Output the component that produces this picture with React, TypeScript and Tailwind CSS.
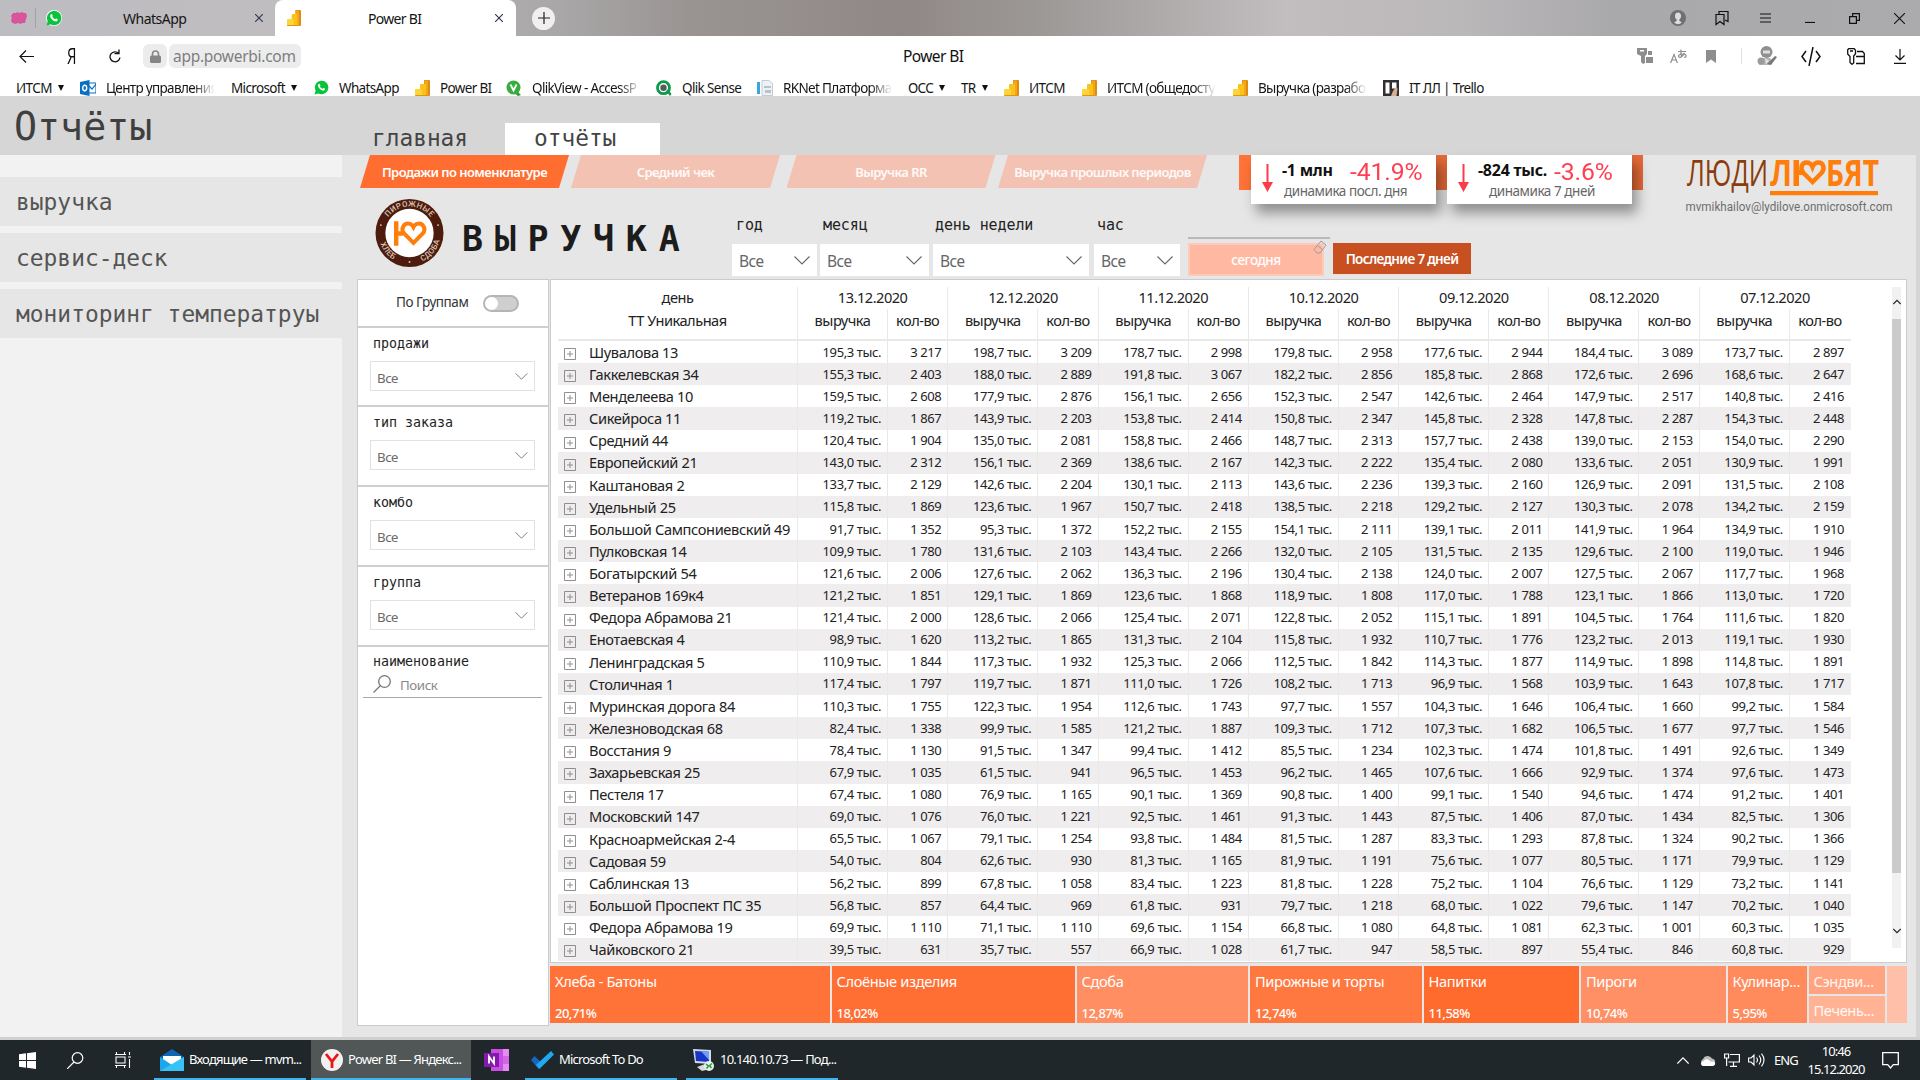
import React from "react";

const SANS = "font-['Noto_Sans','Open_Sans',sans-serif]";
const MONO = "font-['DejaVu_Sans_Mono',monospace]";

const dates = ["13.12.2020", "12.12.2020", "11.12.2020", "10.12.2020", "09.12.2020", "08.12.2020", "07.12.2020"];

const rows: string[] = [
  "Шувалова 13|195,3|3 217|198,7|3 209|178,7|2 998|179,8|2 958|177,6|2 944|184,4|3 089|173,7|2 897",
  "Гаккелевская 34|155,3|2 403|188,0|2 889|191,8|3 067|182,2|2 856|185,8|2 868|172,6|2 696|168,6|2 647",
  "Менделеева 10|159,5|2 608|177,9|2 876|156,1|2 656|152,3|2 547|142,6|2 464|147,9|2 517|140,8|2 416",
  "Сикейроса 11|119,2|1 867|143,9|2 203|153,8|2 414|150,8|2 347|145,8|2 328|147,8|2 287|154,3|2 448",
  "Средний 44|120,4|1 904|135,0|2 081|158,8|2 466|148,7|2 313|157,7|2 438|139,0|2 153|154,0|2 290",
  "Европейский 21|143,0|2 312|156,1|2 369|138,6|2 167|142,3|2 222|135,4|2 080|133,6|2 051|130,9|1 991",
  "Каштановая 2|133,7|2 129|142,6|2 204|130,1|2 113|143,6|2 236|139,3|2 160|126,9|2 091|131,5|2 108",
  "Удельный 25|115,8|1 869|123,6|1 967|150,7|2 418|138,5|2 218|129,2|2 127|130,3|2 078|134,2|2 159",
  "Большой Сампсониевский 49|91,7|1 352|95,3|1 372|152,2|2 155|154,1|2 111|139,1|2 011|141,9|1 964|134,9|1 910",
  "Пулковская 14|109,9|1 780|131,6|2 103|143,4|2 266|132,0|2 105|131,5|2 135|129,6|2 100|119,0|1 946",
  "Богатырский 54|121,6|2 006|127,6|2 062|136,3|2 196|130,4|2 138|124,0|2 007|127,5|2 067|117,7|1 968",
  "Ветеранов 169к4|121,2|1 851|129,1|1 869|123,6|1 868|118,9|1 808|117,0|1 788|123,1|1 866|113,0|1 720",
  "Федора Абрамова 21|121,4|2 000|128,6|2 066|125,4|2 071|122,8|2 052|115,1|1 891|104,5|1 764|111,6|1 820",
  "Енотаевская 4|98,9|1 620|113,2|1 865|131,3|2 104|115,8|1 932|110,7|1 776|123,2|2 013|119,1|1 930",
  "Ленинградская 5|110,9|1 844|117,3|1 932|125,3|2 066|112,5|1 842|114,3|1 877|114,9|1 898|114,8|1 891",
  "Столичная 1|117,4|1 797|119,7|1 871|111,0|1 726|108,2|1 713|96,9|1 568|103,9|1 643|107,8|1 717",
  "Муринская дорога 84|110,3|1 755|122,3|1 954|112,6|1 743|97,7|1 557|104,3|1 646|106,4|1 660|99,2|1 584",
  "Железноводская 68|82,4|1 338|99,9|1 585|121,2|1 887|109,3|1 712|107,3|1 682|106,5|1 677|97,7|1 546",
  "Восстания 9|78,4|1 130|91,5|1 347|99,4|1 412|85,5|1 234|102,3|1 474|101,8|1 491|92,6|1 349",
  "Захарьевская 25|67,9|1 035|61,5|941|96,5|1 453|96,2|1 465|107,6|1 666|92,9|1 374|97,6|1 473",
  "Пестеля 17|67,4|1 080|76,9|1 165|90,1|1 369|90,8|1 400|99,1|1 540|94,6|1 474|91,2|1 401",
  "Московский 147|69,0|1 076|76,0|1 221|92,5|1 461|91,3|1 443|87,5|1 406|87,0|1 434|82,5|1 306",
  "Красноармейская 2-4|65,5|1 067|79,1|1 254|93,8|1 484|81,5|1 287|83,3|1 293|87,8|1 324|90,2|1 366",
  "Садовая 59|54,0|804|62,6|930|81,3|1 165|81,9|1 191|75,6|1 077|80,5|1 171|79,9|1 129",
  "Саблинская 13|56,2|899|67,8|1 058|83,4|1 223|81,8|1 228|75,2|1 104|76,6|1 129|73,2|1 141",
  "Большой Проспект ПС 35|56,8|857|64,4|969|61,8|931|79,7|1 218|68,0|1 022|79,6|1 147|70,2|1 040",
  "Федора Абрамова 19|69,9|1 110|71,1|1 110|69,6|1 154|66,8|1 080|64,8|1 081|62,3|1 001|60,3|1 035",
  "Чайковского 21|39,5|631|35,7|557|66,9|1 028|61,7|947|58,5|897|55,4|846|60,8|929",
];

function Chevron({ className = "" }: { className?: string }) {
  return (
    <svg className={className} viewBox="0 0 16 9" fill="none" stroke="currentColor" strokeWidth="1.1">
      <path d="M.5.5 8 8 15.5.5" />
    </svg>
  );
}

function PbiIcon({ className = "w-[15px] h-4" }: { className?: string }) {
  return (
    <svg className={className} viewBox="0 0 15 16" preserveAspectRatio="none">
      <path d="M9 0h5q1 0 1 1v14q0 1-1 1H9z" fill="#e08a10" />
      <path d="M9.5.5h3.5V16H9z" fill="#f0a818" />
      <path d="M5 5q0-1 1-1h4q1 0 1 1v11H5z" fill="#fbc21c" />
      <path d="M0 10q0-1 1-1h5q1 0 1 1v6H1q-1 0-1-1z" fill="#fdd534" />
      <path d="M0 15h14q-.5 1-1 1H1q-1 0-1-1z" fill="#e59316" />
    </svg>
  );
}

function WhatsAppIcon({ className = "w-[15px] h-[15px]" }: { className?: string }) {
  return (
    <svg className={className} viewBox="0 0 16 16">
      <circle cx="8" cy="8" r="8" fill="#fff" />
      <path d="M.6 15.4 1.7 11.300A7.200 7.200 0 1 1 4.600 14.300z" fill="#08c33c" />
      <path d="M5 4.200q.7-.6 1.200.2l.6 1.300q.1.4-.5 1.100 1 1.700 2.800 2.500.8-1 1.100-.8l1.500.8q.3 1.700-1.500 2.100C7.500 11.500 4 8 4.100 5.700q.1-.9.900-1.500z" fill="#fff" />
    </svg>
  );
}

function OutlookIcon() {
  return (
    <svg className="h-4 w-4" viewBox="0 0 16 16">
      <path d="M7 3h9v10H7z" fill="#fff" stroke="#0a6fc2" strokeWidth="1.200" />
      <path d="m8 5 4 4 4-5" fill="none" stroke="#0a6fc2" strokeWidth="1.200" />
      <path d="m0 2 9.500-2v16L0 14z" fill="#0a6fc2" />
      <ellipse cx="4.700" cy="8" rx="2" ry="2.700" fill="none" stroke="#fff" strokeWidth="1.400" />
    </svg>
  );
}

function QlikViewIcon() {
  return (
    <svg className="h-4 w-4" viewBox="0 0 16 16">
      <path d="m10 10 5 5-3 1-4-3z" fill="#2c9a35" />
      <circle cx="7.500" cy="7.500" r="7" fill="#36ad3e" />
      <path d="m4.500 4.500 3 6 3-6" fill="none" stroke="#fff" strokeWidth="1.800" />
    </svg>
  );
}

function QlikSenseIcon() {
  return (
    <svg className="h-4 w-4" viewBox="0 0 16 16">
      <circle cx="7.500" cy="7.700" r="6" fill="#fff" stroke="#0a9a4a" strokeWidth="2.800" />
      <circle cx="7.500" cy="7.700" r="3.200" fill="#545a5e" />
      <path d="m10 11 2-1.500 3.500 4.500-1.500 2z" fill="#0a9a4a" />
    </svg>
  );
}

function RkIcon() {
  return (
    <svg className="h-4 w-4" viewBox="0 0 16 16">
      <path d="M0 2h3v12H0z" fill="#3ea3dc" />
      <path d="M5 .5h7l3.500 3V15.500H5z" fill="#eef2f5" stroke="#c2cdd5" />
      <path d="M7 6h7v2H7zM8 10h6v3H8z" fill="#b7c4d0" />
    </svg>
  );
}

function TrelloIcon() {
  return (
    <svg className="h-4 w-4" viewBox="0 0 16 16">
      <path d="M0 0h16v16H0z" fill="#322f33" />
      <path d="M2.500 2.500h4v11h-4zM9 2.500h4.500v6H9z" fill="#fff" />
      <path d="m10 11 3-4 1.500 1.500-1 7.500H8z" fill="#d6b08c" />
    </svg>
  );
}

type Mark = { w: string; icon?: React.ReactNode; text: string; menu?: boolean; fade?: boolean };
const marks: Mark[] = [
  { w: "w-[64px]", text: "ИТСМ", menu: true },
  { w: "w-[151px]", icon: <OutlookIcon />, text: "Центр управления", fade: true },
  { w: "w-[83px]", text: "Microsoft", menu: true },
  { w: "w-[101px]", icon: <WhatsAppIcon />, text: "WhatsApp" },
  { w: "w-[91px]", icon: <PbiIcon />, text: "Power BI" },
  { w: "w-[150px]", icon: <QlikViewIcon />, text: "QlikView - AccessP", fade: true },
  { w: "w-[101px]", icon: <QlikSenseIcon />, text: "Qlik Sense" },
  { w: "w-[151px]", icon: <RkIcon />, text: "RKNet Платформа", fade: true },
  { w: "w-[53px]", text: "ОСС", menu: true },
  { w: "w-[43px]", text: "TR", menu: true },
  { w: "w-[78px]", icon: <PbiIcon />, text: "ИТСМ" },
  { w: "w-[151px]", icon: <PbiIcon />, text: "ИТСМ (общедосту", fade: true },
  { w: "w-[150px]", icon: <PbiIcon />, text: "Выручка (разрабо", fade: true },
  { w: "w-[120px]", icon: <TrelloIcon />, text: "IT ЛЛ | Trello" },
];

function Browser() {
  return (
    <div className="h-24 w-full overflow-hidden bg-white">
      <div className="flex h-9 items-center bg-[linear-gradient(90deg,#bdbcc0_0%,#bfbdc0_14%,#a9a7a8_29%,#999492_36%,#908886_47%,#9c9896_54%,#c2bdbf_67%,#bbb8ba_76%,#a9a8ab_84%,#abaaad_100%)]">
        <div className="flex h-9 w-[275px] items-center rounded-br-md">
          <svg className="ml-[11px] h-3 w-4" viewBox="0 0 16 12">
            <path d="M2 1h3l1-1 2 1 3-1 2 1h2l1 3-1 3-1 4h-3l-1 1-3-1-3 1-2-1H1L0 8l1-2-1-2z" fill="#d8559c" />
          </svg>
          <div className="mx-2 h-5 w-px bg-[#a3a2a6]" />
          <WhatsAppIcon className="ml-[2px] h-4 w-4" />
          <span className="ml-[61px] w-[132px] pt-px text-[14px] leading-none tracking-[-0.500px] text-[#151515]">WhatsApp</span>
          <svg className="h-2 w-2" viewBox="0 0 8 8" stroke="#333b4a" strokeWidth="1.200"><path d="m0 0 8 8M8 0 0 8" /></svg>
        </div>
        <div className="flex h-9 w-[241px] items-center rounded-t-lg bg-white">
          <PbiIcon className="ml-3 h-4 w-[14px]" />
          <span className="ml-[67px] w-[127px] pt-px text-[14px] leading-none tracking-[-0.700px] text-[#151515]">Power BI</span>
          <svg className="h-2 w-2" viewBox="0 0 8 8" stroke="#333b4a" strokeWidth="1.200"><path d="m0 0 8 8M8 0 0 8" /></svg>
        </div>
        <div className="ml-4 flex h-[23px] w-[23px] items-center justify-center rounded-full bg-[#f0f0f0]">
          <svg className="h-3 w-3" viewBox="0 0 12 12" stroke="#222" strokeWidth="1.200"><path d="M0 6h12M6 0v12" /></svg>
        </div>
        <div className="ml-auto mr-[15px] flex items-center">
          <svg className="h-4 w-4" viewBox="0 0 16 16">
            <circle cx="8" cy="8" r="8" fill="#707073" />
            <path d="M8 2.500c-2 0-3 1.500-3 3.500 0 1.800.8 3 1.800 3.800L6.500 11c-1 .5-2 1-2.200 1.800Q8 15.500 11.700 12.800 11 11.500 9.500 11l-.3-1.200C10.200 9 11 7.800 11 6c0-2-1-3.500-3-3.500z" fill="#dcdcde" />
          </svg>
          <svg className="ml-[29px] h-[15px] w-[14px]" viewBox="0 0 14 15" fill="none" stroke="#111" strokeWidth="1.200">
            <path d="M1 3.500h8v10L5 10.500l-4 3z" /><path d="M4 3.500v-3h9v10l-3-1.500" />
          </svg>
          <svg className="ml-[31px] h-[10px] w-[11px]" viewBox="0 0 11 10" stroke="#111" strokeWidth="1.200"><path d="M0 1h11M0 5h11M0 9h11" /></svg>
          <svg className="ml-[34px] h-[10px] w-[10px]" viewBox="0 0 10 10" stroke="#111" strokeWidth="1.200"><path d="M0 9.500h10" /></svg>
          <svg className="ml-[34px] h-[11px] w-[11px]" viewBox="0 0 11 11" fill="none" stroke="#111" strokeWidth="1.200"><path d="M.6 3.600h6.800v6.800H.6zM3.600 3.500V.6h6.800v6.800h-3" /></svg>
          <svg className="ml-[34px] h-[11px] w-[11px]" viewBox="0 0 11 11" stroke="#111" strokeWidth="1.100"><path d="m0 0 11 11M11 0 0 11" /></svg>
        </div>
      </div>
      <div className="flex h-10 items-center text-[#111]">
        <svg className="ml-[19px] h-[13px] w-[15px]" viewBox="0 0 15 13" fill="none" stroke="currentColor" strokeWidth="1.200"><path d="M7 .5 1 6.500l6 6M1 6.500h14" /></svg>
        <span className="ml-[33px] w-[10px] text-[21px] font-normal leading-none font-['Open_Sans',sans-serif]">
          <span className="inline-block origin-left scale-x-[0.72]">Я</span>
        </span>
        <svg className="ml-[32px] h-[15px] w-[12px]" viewBox="0 0 12 15" fill="none" stroke="currentColor" strokeWidth="1.300"><path d="M9.800 4.500A5 5 0 1 0 11 8.500M10 .5v4.200H5.500" /></svg>
        <div className="ml-[22px] flex h-6 w-6 items-center justify-center rounded-md bg-[#ececec]">
          <svg className="h-[13px] w-[11px]" viewBox="0 0 11 13"><path d="M2.500 6V4a3 3 0 0 1 6 0v2" fill="none" stroke="#868686" strokeWidth="1.600" /><rect y="5.500" width="11" height="7.500" rx="1.500" fill="#868686" /></svg>
        </div>
        <div className="ml-[2px] flex h-6 w-[132px] items-center rounded-md bg-[#ececec] pt-[2px] pl-1 text-[15.500px] leading-none tracking-[-0.280px] whitespace-nowrap text-[#7e7e7e]">app.powerbi.com</div>
        <div className="ml-[602px] w-[60px] pt-[2px] text-[15.500px] leading-none tracking-[-0.600px] whitespace-nowrap">Power BI</div>
        <div className="ml-auto mr-[14px] flex items-center">
          <svg className="h-4 w-4" viewBox="0 0 16 16" fill="#8d8d8d"><path d="M0 0h10v6L8 8v7l-2 1-2-2V8L0 6zM11 3h4v4h-4zM9 9h7v6H9z" /><path d="M3 2h4v1.500H3z" fill="#fff" /></svg>
          <svg className="ml-[17px] h-[15px] w-[17px]" viewBox="0 0 17 15" fill="none" stroke="#8d8d8d" strokeWidth="1.200"><path d="M.6 14 4 5.500 7.400 14M1.800 11h4.400M8 2.500h8M11 .5c-.3 4 0 5 .6 7M14.500 4c-1 3-4 5-5.500 4S9 5 13 5s4 3 1 3.500" /></svg>
          <svg className="ml-[19px] h-[13px] w-[10px]" viewBox="0 0 10 13" fill="#8d8d8d"><path d="M0 0h10v13L5 9.500 0 13z" /></svg>
          <div className="ml-[25px] h-4 w-px bg-[#e2e2e2]" />
          <svg className="ml-[15px] h-5 w-5" viewBox="0 0 20 20"><circle cx="9.500" cy="6" r="6" fill="#8f8f8f" /><path d="M6 4.500h7v3H6z" fill="#dedede" /><path d="m2 19 1-7h10l3 3-4 4z" fill="#b5b5b5" /><path d="m10 18 8-8 2 1-6 8z" fill="#777" /><circle cx="4" cy="15" r="3.500" fill="#9b9b9b" /><path d="m8 12 4 3-3 3z" fill="#e2e2e2" /></svg>
          <svg className="ml-[24px] h-[19px] w-5" viewBox="0 0 20 19" fill="none" stroke="currentColor" strokeWidth="1.500"><path d="M5 4 1 9.500 5 15M15 4l4 5.500L15 15M12 0 8 19" /></svg>
          <svg className="ml-[26px] h-[17px] w-[18px]" viewBox="0 0 18 17" fill="none" stroke="currentColor" strokeWidth="1.300"><path d="M1.700.700h5.500l1.300 1.500v3.500L6.700 8v7L5 16.300 3 14.500V8.500L.7 6V1.700zM3 3h3M10 3.500h5.500l1.800 2V15.500H9M9 8.500h8" /></svg>
          <svg className="ml-[29px] h-[15px] w-3" viewBox="0 0 12 15" fill="none" stroke="currentColor" strokeWidth="1.200"><path d="M6 0v11M1.500 6.500 6 11l4.500-4.500M0 14.400h12" /></svg>
        </div>
      </div>
      <div className="flex h-5 items-start pl-4 pt-1 text-[13.500px] leading-[17px] tracking-[-0.650px] text-[#151515]">
        {marks.map((m, i) => (
          <div key={i} className={`flex shrink-0 items-start ${m.w}`}>
            {m.icon}
            <span className={`whitespace-nowrap ${m.icon ? "ml-[10px]" : ""} ${m.fade ? "w-[109px] [mask-image:linear-gradient(90deg,#000_80%,transparent)]" : ""}`}>{m.text}</span>
            {m.menu && <span className="ml-[6px] mt-[5px] h-0 w-0 border-x-[3.500px] border-t-[6px] border-x-transparent border-t-[#111]" />}
          </div>
        ))}
      </div>
    </div>
  );
}

const SHAPE = "[clip-path:polygon(10px_0,100%_0,calc(100%_-_10px)_100%,0_100%)]";

function Kpi({ value, pct, label, valueBox, labelPad }: { value: string; pct: string; label: string; valueBox: string; labelPad: string }) {
  return (
    <div className="relative h-[49px] w-[184.500px] bg-white shadow-[5px_9px_12px_rgba(0,0,0,0.38)]">
      <div className="flex h-full">
        <svg className="ml-[11px] mt-[9px] h-[28px] w-[11px]" viewBox="0 0 11 28"><path d="M4.500 0h2v18H11L5.500 28 0 18h4.500z" fill="#fb3b4a" /></svg>
        <div className="flex-1 pl-[9px]">
          <div className="flex h-[28px] items-center pt-[2px]">
            <span className={`text-[16px] leading-none font-bold tracking-[-0.250px] whitespace-nowrap text-[#111] ${valueBox}`}>{value}</span>
            <span className="inline-block origin-left scale-x-[1.030] pt-[3px] text-[24px] leading-[22px] tracking-[-0.100px] text-[#ff3f50] font-['Roboto',sans-serif]">{pct}</span>
          </div>
          <div className={`text-[13.500px] leading-[17px] tracking-[-0.450px] whitespace-nowrap text-[#666] ${labelPad}`}>{label}</div>
        </div>
      </div>
    </div>
  );
}

function BrandText() {
  return (
    <svg className="ml-[27px] h-[65px] w-[230px] shrink-0" viewBox="0 5 230 65">
      <g fontFamily="'Open Sans', sans-serif" fontSize="36">
        <text x="17" y="36" textLength="81" lengthAdjust="spacingAndGlyphs" fill="#8b3c0c">ЛЮДИ</text>
        <g fill="#ff7d0a" fontWeight="700">
          <text x="100" y="36" textLength="22" lengthAdjust="spacingAndGlyphs">Л</text>
          <text x="156" y="36" textLength="53" lengthAdjust="spacingAndGlyphs">БЯТ</text>
        </g>
      </g>
      <path d="M123.500 10h5.500v10h4v5h-4v11h-5.500z" fill="#ff7d0a" />
      <path d="m142.500 32-9-9c-4-4.500-1.500-10.500 3-10.500 3 0 5 2 6 4.500 1-2.500 3-4.500 6-4.500 4.500 0 7 6 3 10.500z" fill="none" stroke="#ff7d0a" strokeWidth="4.500" />
      <path d="M100 41h108v4.300H100z" fill="#ff7d0a" />
      <text x="15.500" y="60.500" textLength="207" lengthAdjust="spacingAndGlyphs" fontFamily="Roboto, sans-serif" fontSize="13.500" fill="#6e6e6e">mvmikhailov@lydilove.onmicrosoft.com</text>
    </svg>
  );
}

function RoundLogo() {
  return (
    <svg className="h-[70px] w-[69px]" viewBox="0 0 70 70">
      <circle cx="35" cy="35" r="34.500" fill="#4d1c0c" />
      <circle cx="35" cy="35" r="24.500" fill="#fff" />
      <defs>
        <path id="arcTop" d="M8.200 35a26.800 26.800 0 0 1 53.600 0" />
        <path id="arcBottom" d="M3.500 35a31.500 31.500 0 0 0 63 0" />
      </defs>
      <g fill="#d8c4b8" fontSize="8" fontFamily="Roboto, sans-serif" fontWeight="500" letterSpacing=".4">
        <text><textPath href="#arcTop" startOffset="50%" textAnchor="middle">ПИРОЖНЫЕ</textPath></text>
        <text><textPath href="#arcBottom" startOffset="22%" textAnchor="middle">ХЛЕБ</textPath></text>
        <text><textPath href="#arcBottom" startOffset="78%" textAnchor="middle">СДОБА</textPath></text>
      </g>
      <g fill="#d8c0b0"><circle cx="35" cy="64.500" r="1" /><circle cx="6" cy="27" r="1" /><circle cx="64" cy="27" r="1" /></g>
      <path d="M21.500 23v25M21.500 35.500h7" stroke="#ff7d0a" strokeWidth="4.500" fill="none" />
      <path d="m39 45-9.500-9.500c-4-4.500 0-11 5-10 3 .6 4 2.500 4.500 3.500.5-1 1.500-3 4.500-3.500 5-1 9 5.500 5 10z" fill="none" stroke="#ff7d0a" strokeWidth="4" />
    </svg>
  );
}

function TopFilter({ label, cls, labelPad }: { label: string; cls: string; labelPad: string }) {
  return (
    <div className={cls}>
      <div className={`${MONO} ${labelPad} h-[26px] pt-[7px] text-[15px] leading-none tracking-[-0.100px] whitespace-pre text-[#222] mt-[23px]`}>{label}</div>
      <div className="mt-[7px] flex h-[32px] items-center justify-between bg-white pr-[7px] pl-[7px] text-[15.500px] leading-none tracking-[-0.500px] text-[#666]">
        <span className="pt-[4px]">Все</span>
        <Chevron className="h-[9px] w-4 text-[#666]" />
      </div>
    </div>
  );
}

function SideFilter({ label, h }: { label: string; h: string }) {
  return (
    <div className={`border-b-2 border-[#cfcfcf] pr-[13px] pl-[12px] ${h}`}>
      <div className={`${MONO} pt-[8px] pl-[3px] text-[13.300px] leading-[16px] text-[#222]`}>{label}</div>
      <div className="mt-[9px] flex h-[30px] items-center justify-between border border-[#e2e2e2] pr-[6px] pl-[6px] text-[13.300px] leading-none tracking-[-0.500px] text-[#6b6b6b]">
        <span className="pt-[5px]">Все</span>
        <Chevron className="h-[7px] w-[13px] text-[#5f6c6c]" />
      </div>
    </div>
  );
}

function Matrix() {
  return (
    <div className="flex h-[684px] w-[1357px] border border-[#cbcbcb] bg-white">
      <div className="ml-[7px] mt-[7px] w-[1293px] overflow-hidden text-[14.600px] tracking-[-0.500px] text-[#222]">
        <div className="flex h-[54px] border-b-2 border-[#e9e9e9]">
          <div className="flex w-[240px] flex-col items-center border-r border-[#e9e9e9] leading-[22.500px]">
            <span className="-mt-px">день</span><span>ТТ Уникальная</span>
          </div>
          {dates.map((d) => (
            <div key={d} className="w-[150.300px] border-r border-[#e9e9e9] text-center leading-[22.500px] last:border-r-0">
              <div className="-mt-px">{d}</div>
              <div className="flex h-[30px]">
                <span className="w-[90px] border-r border-[#e9e9e9]">выручка</span>
                <span className="flex-1">кол-во</span>
              </div>
            </div>
          ))}
        </div>
        {rows.map((r, i) => {
          const c = r.split("|");
          return (
            <div key={i} className={`flex h-[22.130px] ${i % 2 ? "bg-[#efedee]" : "bg-white"}`}>
              <div className="flex w-[240px] items-center border-r border-[#e9e9e9] pl-[6px]">
                <svg className="mt-[4px] h-[12px] w-[12px]" viewBox="0 0 12 12" fill="none" stroke="#8f8f8f"><path d="M.5.5h11v11H.5zM3 6h6M6 3v6" /></svg>
                <span className="ml-[13px] leading-none tracking-[-0.350px] whitespace-nowrap">{c[0]}</span>
              </div>
              {dates.map((d, k) => (
                <div key={d} className="flex w-[150.300px] items-center border-r border-[#e9e9e9] text-right text-[13px] leading-none tracking-[-0.400px] last:border-r-0">
                  <span className="flex h-full w-[90px] items-center justify-end border-r border-[#e9e9e9] pr-[6px]">{c[1 + 2 * k]} тыс.</span>
                  <span className="flex-1 pr-[6px]">{c[2 + 2 * k]}</span>
                </div>
              ))}
            </div>
          );
        })}
      </div>
      <div className="ml-auto mr-[5px] mt-[7px] flex h-[661px] w-[9px] flex-col items-center bg-[#f1f1f1]">
        <Chevron className="mt-[12px] h-[6px] w-[8px] shrink-0 rotate-180 text-[#222] [stroke-width:2.400]" />
        <div className="mt-[14px] h-[554px] w-[9px] shrink-0 bg-[#cbcbcb]" />
        <Chevron className="mt-[55px] h-[6px] w-[8px] shrink-0 text-[#222] [stroke-width:2.400]" />
      </div>
    </div>
  );
}

function Tile({ cls, name, pct }: { cls: string; name: string; pct: string }) {
  return (
    <div className={`flex h-full shrink-0 flex-col justify-between overflow-hidden pt-[6px] pb-[2px] pl-[5px] whitespace-nowrap text-white ${cls}`}>
      <span className="text-[14.600px] leading-[18px] tracking-[-0.350px]">{name}</span>
      <span className="text-[13px] leading-[16px] font-medium tracking-[-0.500px]">{pct}</span>
    </div>
  );
}

function TreeMap() {
  return (
    <div className="mt-[3px] flex h-[57px] w-[1357px] gap-[2px]">
      <Tile cls="w-[279.500px] bg-[#ff7339]" name="Хлеба - Батоны" pct="20,71%" />
      <Tile cls="w-[243px] bg-[#ff6e33]" name="Слоёные изделия" pct="18,02%" />
      <Tile cls="w-[171.500px] bg-[#ff8e62]" name="Сдоба" pct="12,87%" />
      <Tile cls="w-[171.500px] bg-[#ff783f]" name="Пирожные и торты" pct="12,74%" />
      <Tile cls="w-[155.500px] bg-[#ff6a2d]" name="Напитки" pct="11,58%" />
      <Tile cls="w-[144.500px] bg-[#ff9065]" name="Пироги" pct="10,74%" />
      <Tile cls="w-[79px] bg-[#ff8a5c]" name="Кулинар..." pct="5,95%" />
      <div className="flex w-[76px] flex-col gap-[2px] text-[14.600px] leading-[31px] tracking-[-0.350px] whitespace-nowrap text-white/90">
        <div className="h-[28px] bg-[#ffa380] pl-[5px]">Сэндви...</div>
        <div className="h-[27px] bg-[#ffb294] pl-[5px] leading-[29px]">Печень...</div>
      </div>
      <div className="flex-1 bg-[#ffbfa8]" />
    </div>
  );
}

function Report() {
  const tabs = [
    { t: "Продажи по номенклатуре", c: "bg-[#ff6d30] text-white" },
    { t: "Средний чек", c: "ml-[2px] bg-[#f3c2b3] text-white/90" },
    { t: "Выручка RR", c: "ml-[6.500px] bg-[#f3c2b3] text-white/90" },
    { t: "Выручка прошлых периодов", c: "ml-[2.500px] bg-[#f3c2b3] text-white/90" },
  ];
  return (
    <div className="h-[882px] w-[1574px] bg-[#e6e6e6]">
      <div className="flex h-[33px] items-start pl-[18px]">
        {tabs.map((x) => (
          <div key={x.t} className={`flex h-[33px] w-[209px] shrink-0 items-center justify-center text-[13px] leading-none font-semibold tracking-[-0.550px] whitespace-nowrap ${SHAPE} ${x.c}`}>
            <span className="pt-[2px]">{x.t}</span>
          </div>
        ))}
        <div className="ml-[32px] flex shrink-0 items-start">
          <div className="h-[35px] w-[12px] bg-[#ff7238]" />
          <Kpi value="-1 млн" pct="-41.9%" label="динамика посл. дня" valueBox="w-[68px]" labelPad="pl-[2px]" />
          <div className="h-[35px] w-[11.500px] bg-[#e56a38]" />
          <Kpi value="-824 тыс." pct="-3.6%" label="динамика 7 дней" valueBox="w-[76px]" labelPad="pl-[11px]" />
          <div className="h-[35px] w-[11.500px] bg-[#e56a38]" />
        </div>
        <BrandText />
      </div>
      <div className="flex h-[91px] items-start pl-[33px]">
        <div className="mt-[10px]"><RoundLogo /></div>
        <div className={`${MONO} ml-[18px] mt-[34px] w-[270px] text-[35px] leading-none font-bold tracking-[11.700px] text-[#1c1c1c]`}>ВЫРУЧКА</div>
        <div className="relative z-10 flex">
          <TopFilter label="год" cls="w-[85px]" labelPad="pl-[4px]" />
          <TopFilter label="месяц" cls="ml-[3px] w-[109px]" labelPad="pl-[3px]" />
          <TopFilter label="день недели" cls="ml-[4px] w-[156px]" labelPad="pl-[2px]" />
          <TopFilter label="час" cls="ml-[5px] w-[86px]" labelPad="pl-[3px]" />
        </div>
        <div className="relative ml-[8px] mt-[49px] w-[142px] border-t-2 border-[#b9b9b9] pt-[4px]">
          <div className="flex h-[33px] w-[136px] items-center justify-center border-2 border-[#fbcabb] bg-[#ffb9a3] pt-[3px] text-[13.500px] leading-none font-medium tracking-[-0.500px] text-white">сегодня</div>
          <svg className="absolute right-[3px] top-[1px] h-[14px] w-[14px]" viewBox="0 0 14 14" fill="none" stroke="#9c9c9c"><path d="m8 1 5 4-6 8H4L1 9.500zM4.500 5.500l5 4" /></svg>
        </div>
        <div className="ml-[3px] mt-[55px] flex h-[32px] w-[138px] items-center justify-center border-b border-[#f5dcd2] bg-[#c84f20] pt-[3px] text-[13.500px] leading-none font-semibold tracking-[-0.650px] text-white">Последние 7 дней</div>
      </div>
      <div className="flex pl-[15px]">
        <div className="h-[747px] w-[192px] border border-[#cbcbcb] bg-white">
          <div className="flex h-[48px] items-center border-b-2 border-[#cfcfcf] pl-[38px] text-[13.500px] leading-none tracking-[-0.450px] text-[#333]">
            <span className="w-[87px] whitespace-nowrap">По Группам</span>
            <div className="flex h-[17px] w-[36px] items-center rounded-full border-2 border-[#b5b5b5] bg-[#cfcfcf]">
              <div className="h-[13px] w-[13px] rounded-full bg-white" />
            </div>
          </div>
          <SideFilter label="продажи" h="h-[79px]" />
          <SideFilter label="тип заказа" h="h-[80px]" />
          <SideFilter label="комбо" h="h-[80px]" />
          <SideFilter label="группа" h="h-[80px]" />
          <div className="pr-[6px] pl-[5px]">
            <div className={`${MONO} pt-[7px] pl-[10px] text-[13.300px] leading-[16px] text-[#222]`}>наименование</div>
            <div className="flex h-[28px] items-center border-b border-[#aaa] pl-[10px] text-[13.300px] leading-none tracking-[-0.400px] text-[#8a8a8a]">
              <svg className="h-[18px] w-[18px]" viewBox="0 0 18 18" fill="none" stroke="#777" strokeWidth="1.300"><circle cx="11.500" cy="6.500" r="5.800" /><path d="M7.500 10.500.5 17.500" /></svg>
              <span className="ml-[9px] pt-[4px]">Поиск</span>
            </div>
          </div>
        </div>
        <div className="ml-px flex flex-col">
          <Matrix />
          <TreeMap />
        </div>
      </div>
    </div>
  );
}

function Task({ cls, icon, text }: { cls: string; icon: React.ReactNode; text: string }) {
  return (
    <div className={`flex h-10 shrink-0 items-center gap-[5px] border-b-2 border-[#42b4ec] pt-[1px] pl-[6px] text-[13px] leading-none tracking-[-0.800px] whitespace-nowrap text-white ${cls}`}>
      {icon}
      <span>{text}</span>
    </div>
  );
}

function Taskbar() {
  return (
    <div className="flex h-10 w-full items-center bg-[#20272a] text-white">
      <svg className="ml-[19px] h-[17px] w-[17px]" viewBox="0 0 17 17" fill="#fff"><path d="m0 2.300 7-1v6.700H0zM8 1.200 17 0v8H8zM0 9h7v6.700l-7-1zM8 9h9v8l-9-1.200z" /></svg>
      <svg className="ml-[31px] h-[17px] w-[17px]" viewBox="0 0 17 17" fill="none" stroke="#fff" strokeWidth="1.200"><circle cx="10.500" cy="6" r="5.300" /><path d="M7 10 0 17" /></svg>
      <svg className="ml-[31px] h-[16px] w-[16px]" viewBox="0 0 16 16" fill="none" stroke="#fff" strokeWidth="1.100"><path d="M0 2.500h11M1.500 0v2.500M9.500 0v2.500M1 5h9v6H1zM0 13.500h11M1.500 13.500V16M9.500 13.500V16M14.500 0v3M14.500 7v9M13 5h3" /></svg>
      <Task cls="ml-[23px] w-[152px]" text="Входящие — mvm..." icon={
        <svg className="h-[22px] w-6 shrink-0" viewBox="0 0 24 22"><path d="M0 8 12 0l12 8v14H0z" fill="#0f65b5" /><path d="M3 7h18v9H3z" fill="#fff" /><path d="M0 8v14h24V8l-12 8z" fill="#1aa7ec" /><path d="M0 22 24 8v14z" fill="#35c4f5" /></svg>
      } />
      <Task cls="ml-[5px] w-[160px] !pl-[10px] bg-[#515657]" text="Power BI — Яндекс..." icon={
        <svg className="h-[22px] w-[22px] shrink-0" viewBox="0 0 22 22"><circle cx="11" cy="11" r="11" fill="#f1f1f1" /><path d="m5 5 6 7.500L17 5M11 12v7" fill="none" stroke="#f01414" strokeWidth="2.800" /></svg>
      } />
      <svg className="ml-[13px] h-[22px] w-[25px]" viewBox="0 0 25 22"><path d="M7 0h18v22H7z" fill="#c94fe0" /><path d="M19 0h6v22h-6z" fill="#e68bf2" /><path d="M19 7h6v8h-6z" fill="#d565e8" /><path d="M0 4h15v14H0z" fill="#8419ac" /><path d="M5 14.500v-7l5 7v-7" fill="none" stroke="#fff" strokeWidth="1.800" /></svg>
      <Task cls="ml-[16px] w-[152px]" text="Microsoft To Do" icon={
        <svg className="h-[18px] w-[23px] shrink-0" viewBox="0 0 23 18"><path d="m0 9 3.500-4L11 12l-3.500 6z" fill="#1667bd" /><path d="M20 0 23 3.500 8.500 18 5 14z" fill="#1fa9f2" /></svg>
      } />
      <Task cls="ml-[9px] w-[152px] !gap-[5px]" text="10.140.10.73 — Под..." icon={
        <svg className="h-6 w-[23px] shrink-0" viewBox="0 0 23 24"><path d="m1 1 18 1v14L3 15z" fill="#d4dbe5" /><path d="m3 3 14 .7V14L4 13z" fill="#1535c8" /><path d="m9 3.300 8 .4V12z" fill="#6f9cf5" /><path d="m5 19 8-3 5 5-8 2z" fill="#d9d9d9" /><circle cx="17" cy="18" r="5" fill="#e8efe8" /><path d="m14 16 2.500 2-2 2.500M20 15.500l-2.500 2 2 2.500" fill="none" stroke="#18963a" strokeWidth="1.300" /></svg>
      } />
      <div className="ml-auto mr-[21px] flex items-center text-[13px] leading-none tracking-[-0.600px]">
        <Chevron className="h-[7px] w-[12px] rotate-180 [stroke-width:1.600]" />
        <svg className="ml-[10px] h-[11px] w-[17px]" viewBox="0 0 17 11"><path d="M4 11a4 4 0 0 1 0-7 5 5 0 0 1 9-.5A3.800 3.800 0 0 1 13 11z" fill="#bdbdbd" /><path d="M4 11c-3-1-2-5 1-5 1-3 6-2 6.500 1C16 5 18 10 14 11z" fill="#fff" /></svg>
        <svg className="ml-[8px] h-[14px] w-[16px]" viewBox="0 0 16 14" fill="none" stroke="#fff" strokeWidth="1.200"><path d="M6 1.500h9.400v7.500H4.500M.6 1h4v4h-4zM2.600 5v8M9.500 9v4M6 13.400h7" /></svg>
        <svg className="ml-[8px] h-[14px] w-[17px]" viewBox="0 0 17 14" fill="none" stroke="#fff" strokeWidth="1.100"><path d="M.6 5v4h2.500L6 12V2L3.100 5zM8.500 4.500q2 2.500 0 5M11 2.500q3.500 4.500 0 9M13.500.7q5 6.300 0 12.600" /></svg>
        <span className="ml-[9px] w-[24px] pt-px tracking-[-0.900px]">ENG</span>
        <div className="ml-[8px] flex w-[60px] flex-col items-center leading-[18px] tracking-[-0.950px]"><div>10:46</div><div>15.12.2020</div></div>
        <svg className="ml-[16px] h-[17px] w-[17px]" viewBox="0 0 17 17" fill="none" stroke="#fff" strokeWidth="1.300"><path d="M.7.700h15.600v12h-5L8.500 16l-2.800-3.300h-5z" /></svg>
      </div>
    </div>
  );
}

export default function App() {
  return (
    <div className={`${SANS} flex h-[1080px] w-[1920px] flex-col overflow-hidden bg-[#d6d6d6]`}>
      <Browser />
      <div className={`${MONO} flex h-[59px] bg-[#d6d6d6] text-[#444]`}>
        <div className="w-[372px] pt-[12px] pl-[14px] text-[38.300px] leading-none text-[#3f3f3f]">Отчёты</div>
        <div className="w-[133px] pt-[31px] text-[22.800px] leading-none">главная</div>
        <div className="mt-[27px] h-8 w-[155px] bg-white pt-[4px] pl-[29px] text-[22.800px] leading-none">отчёты</div>
      </div>
      <div className="flex h-[882px]">
        <div className={`${MONO} w-[342px] bg-[#f2f2f2] pt-[22px] text-[22.900px] leading-[49px] text-[#555]`}>
          <div className="mb-[7px] h-[49px] bg-[#e6e6e6] pt-px pl-[16px]">выручка</div>
          <div className="mb-[7px] h-[49px] bg-[#e6e6e6] pt-px pl-[16px]">сервис-деск</div>
          <div className="h-[49px] bg-[#e6e6e6] pt-px pl-[16px] whitespace-nowrap">мониторинг температруы</div>
        </div>
        <Report />
      </div>
      <div className="h-[3px] w-full bg-[#d0d0d0]" />
      <Taskbar />
    </div>
  );
}
